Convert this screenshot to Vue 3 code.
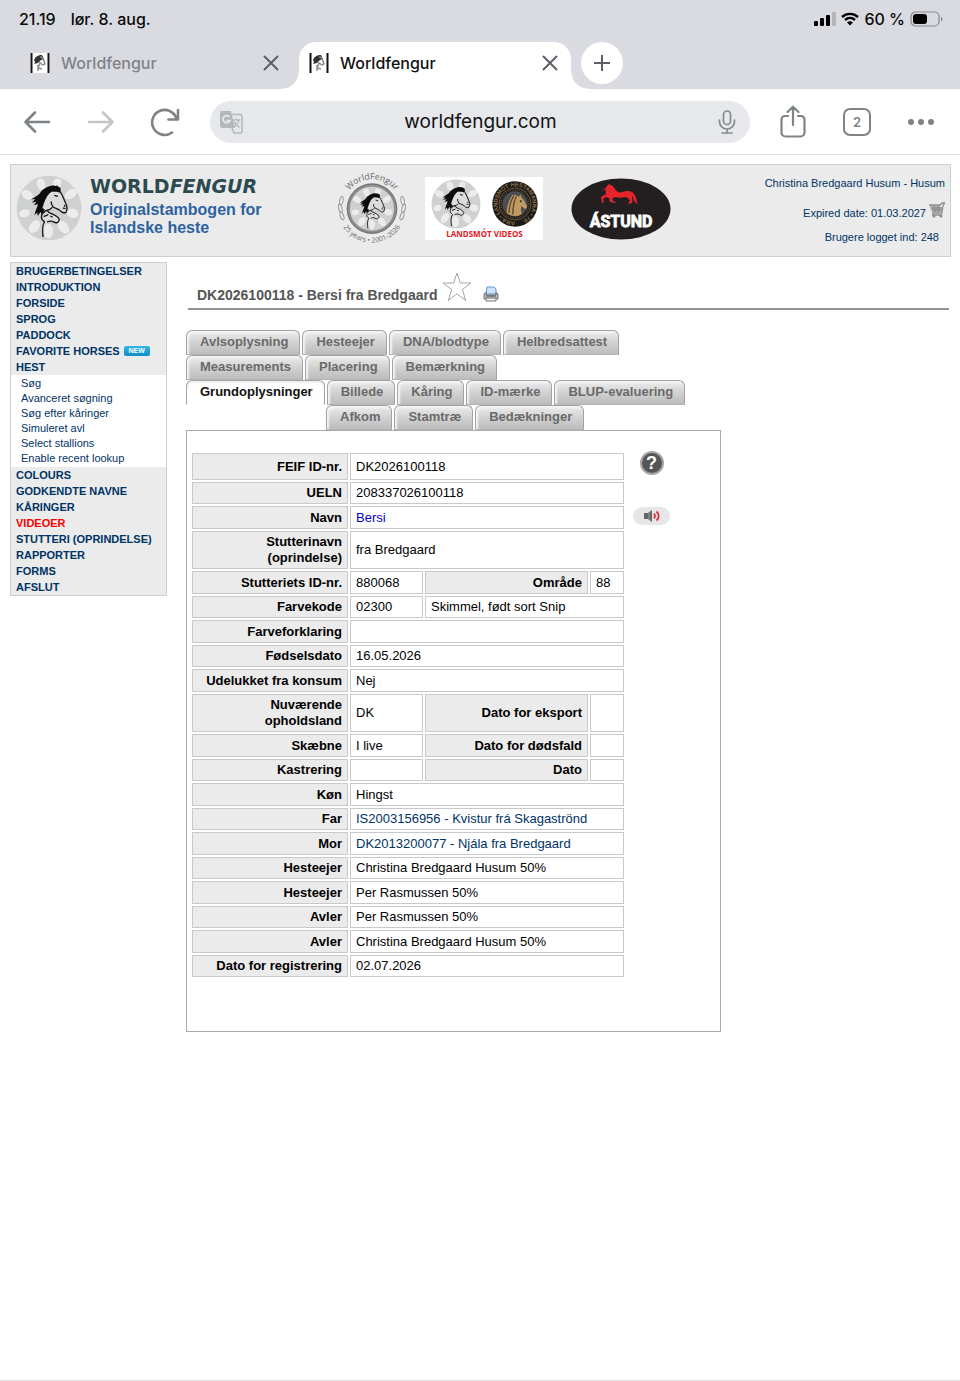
<script setup>
import { ref } from 'vue'

const address = ref('worldfengur.com')

const menuTop = ['BRUGERBETINGELSER', 'INTRODUKTION', 'FORSIDE', 'SPROG', 'PADDOCK', 'FAVORITE HORSES', 'HEST']
const subMenu = ['Søg', 'Avanceret søgning', 'Søg efter kåringer', 'Simuleret avl', 'Select stallions', 'Enable recent lookup']
const menuBottom = ['COLOURS', 'GODKENDTE NAVNE', 'KÅRINGER', 'VIDEOER', 'STUTTERI (OPRINDELSE)', 'RAPPORTER', 'FORMS', 'AFSLUT']

const tabRows = [
  { tabs: ['Avlsoplysning', 'Hesteejer', 'DNA/blodtype', 'Helbredsattest'] },
  { tabs: ['Measurements', 'Placering', 'Bemærkning'] },
  { tabs: ['Grundoplysninger', 'Billede', 'Kåring', 'ID-mærke', 'BLUP-evaluering'] },
  { tabs: ['Afkom', 'Stamtræ', 'Bedækninger'], indent: true }
]

const rows = [
  { label: 'FEIF ID-nr.', value: 'DK2026100118', tall: true },
  { label: 'UELN', value: '208337026100118' },
  { label: 'Navn', value: 'Bersi', kind: 'name' },
  { label: 'Stutterinavn (oprindelse)', value: 'fra Bredgaard' },
  { label: 'Stutteriets ID-nr.', value: '880068', label2: 'Område', value2: '88' },
  { label: 'Farvekode', value: '02300', wide: 'Skimmel, født sort Snip' },
  { label: 'Farveforklaring', value: '' },
  { label: 'Fødselsdato', value: '16.05.2026' },
  { label: 'Udelukket fra konsum', value: 'Nej' },
  { label: 'Nuværende opholdsland', value: 'DK', label2: 'Dato for eksport', value2: '' },
  { label: 'Skæbne', value: 'I live', label2: 'Dato for dødsfald', value2: '' },
  { label: 'Kastrering', value: '', label2: 'Dato', value2: '' },
  { label: 'Køn', value: 'Hingst' },
  { label: 'Far', value: 'IS2003156956 - Kvistur frá Skagaströnd', kind: 'link' },
  { label: 'Mor', value: 'DK2013200077 - Njála fra Bredgaard', kind: 'link' },
  { label: 'Hesteejer', value: 'Christina Bredgaard Husum 50%' },
  { label: 'Hesteejer', value: 'Per Rasmussen 50%' },
  { label: 'Avler', value: 'Per Rasmussen 50%' },
  { label: 'Avler', value: 'Christina Bredgaard Husum 50%' },
  { label: 'Dato for registrering', value: '02.07.2026' }
]

const span = (row) => (row.label2 || row.wide ? 1 : 3)
</script>

<template>
  <div class="screen">
    <svg class="defs" width="0" height="0" aria-hidden="true">
      <symbol id="horses" viewBox="0 0 200 200">
        <path d="M114 32 C96 34 80 42 72 56 C60 66 52 70 45 74 L58 73 L48 84 L62 80 L54 92 L66 88 C66 98 58 108 56 122 L64 114 L66 124 L74 112 L78 118 L98 90 Z" fill="#0c0c0c" />
        <path d="M92 62 C98 48 112 38 126 44 C138 52 142 66 150 84 C156 96 157 102 152 112 C146 117 141 115 134 108 C128 102 120 100 112 96 C108 106 102 108 96 110 L80 100 Z" fill="#dcdcdc" />
        <path d="M126 42 C138 52 142 66 150 84 C156 96 157 102 152 112 C146 118 141 114 134 108 C128 102 120 102 112 96 C108 92 106 86 107 80 M110 98 C104 106 98 106 90 108" fill="none" stroke="#141414" stroke-width="4" />
        <path d="M108 34 C114 28 118 36 122 32 C126 32 128 36 134 38 C136 44 136 50 132 54 C124 48 118 52 110 50 C98 54 92 70 84 84 C76 92 72 84 72 70 C78 52 92 38 108 34Z" fill="#0c0c0c" />
        <path d="M116 62 l11 3 M142 100 l8 2 M146 91 l3 5" stroke="#141414" stroke-width="4" />
        <path d="M96 112 C108 118 122 122 130 134 C130 144 122 147 114 142 C106 138 100 140 94 142 C84 152 80 166 82 186 C78 166 72 142 84 124Z" fill="#dedede" />
        <path d="M94 106 L100 114 C112 118 126 124 131 134 C130 145 122 147 114 142 C106 138 100 140 94 142 M86 112 C76 118 72 132 86 142 C78 154 80 170 82 188 M84 126 L98 120 M76 116 L92 108 M104 125 l7 2" fill="none" stroke="#181818" stroke-width="4" />
      </symbol>
      <symbol id="wheel" viewBox="0 0 200 200">
        <circle cx="100" cy="100" r="98" fill="#cfd1d1" />
        <g fill="#ececec">
          <ellipse cx="76" cy="28" rx="13" ry="18" transform="rotate(-18 76 28)" />
          <ellipse cx="124" cy="28" rx="13" ry="18" transform="rotate(18 124 28)" />
          <ellipse cx="166" cy="58" rx="13" ry="20" transform="rotate(58 166 58)" />
          <ellipse cx="172" cy="116" rx="14" ry="18" transform="rotate(104 172 116)" />
          <ellipse cx="144" cy="158" rx="14" ry="22" transform="rotate(142 144 158)" />
          <ellipse cx="98" cy="170" rx="15" ry="22" />
          <ellipse cx="56" cy="156" rx="14" ry="22" transform="rotate(35 56 156)" />
          <ellipse cx="26" cy="116" rx="12" ry="16" transform="rotate(75 26 116)" />
          <ellipse cx="34" cy="60" rx="13" ry="18" transform="rotate(-58 34 60)" />
        </g>
        <use href="#horses" />
      </symbol>
      <symbol id="favicon" viewBox="0 0 20 20">
        <path d="M0 0h20v20H0z" fill="#fff" />
        <path d="M1.500 0v20M18.500 0v20" stroke="#111" stroke-width="2" />
        <path d="M4 7C5 4 8 2 12 2l2 4-3 1-3 3-4 1 1-2z" fill="#333" />
        <path d="M10 4c4 0 4 5 5 7l-2 1-3-2-2 5 4 1M8 12v6" fill="none" stroke="#8a8a8a" stroke-width="1.500" />
      </symbol>
    </svg>

    <div class="status">
      <span>21.19</span><span class="date">lør. 8. aug.</span>
      <div class="indicators">
        <svg width="22" height="14" viewBox="0 0 22 14"><rect y="9" width="4" height="5" rx="1" /><rect x="6" y="6" width="4" height="8" rx="1" /><rect x="12" y="3" width="4" height="11" rx="1" /><rect x="18" width="4" height="14" rx="1" fill="#b3b5ba" /></svg>
        <svg width="18" height="14" viewBox="0 0 18 14"><path d="M1 5C5.500.8 12.500.8 17 5M4 8c3-2.700 7-2.700 10 0" fill="none" stroke="#000" stroke-width="2.400" /><path d="M6 10.500c2-1.600 4-1.600 6 0L9 13.500z" /></svg>
        <span>60 %</span>
        <svg width="34" height="16" viewBox="0 0 34 16"><rect x="1" y="1" width="28" height="14" rx="4.500" fill="none" stroke="#85878c" stroke-width="1.200" /><rect x="3" y="3" width="14" height="10" rx="3" /><path d="M31 5.500c2 1 2 4 0 5z" fill="#85878c" /></svg>
      </div>
    </div>

    <div class="tabstrip">
      <div class="btab">
        <svg class="fav"><use href="#favicon" /></svg><span>Worldfengur</span>
        <button type="button" aria-label="Luk fane"><svg width="16" height="16" viewBox="0 0 16 16"><path d="M1.500 1.500l13 13M14.500 1.500l-13 13" /></svg></button>
      </div>
      <div class="btab current">
        <svg class="fav"><use href="#favicon" /></svg><span>Worldfengur</span>
        <button type="button" aria-label="Luk fane"><svg width="16" height="16" viewBox="0 0 16 16"><path d="M1.500 1.500l13 13M14.500 1.500l-13 13" /></svg></button>
      </div>
      <button class="plus" type="button" aria-label="Ny fane"><svg width="18" height="18" viewBox="0 0 18 18"><path d="M9 1v16M1 9h16" /></svg></button>
    </div>

    <div class="toolbar">
      <button type="button" aria-label="Tilbage"><svg width="28" height="24" viewBox="0 0 28 24"><path d="M26 12H3M12 2.500L2.500 12 12 21.500" /></svg></button>
      <button type="button" aria-label="Frem" class="dim"><svg width="28" height="24" viewBox="0 0 28 24"><path d="M2 12h23M16 2.500l9.500 9.500-9.500 9.500" /></svg></button>
      <button type="button" aria-label="Genindlæs"><svg width="30" height="30" viewBox="0 0 30 30"><path d="M22 25.500A12.500 12.500 0 1 1 26.500 11.500M28 3v9.500h-9.500" /></svg></button>
      <div class="address">
        <svg width="24" height="24" viewBox="0 0 24 24"><path d="M2 1h10l4 17H3a2 2 0 0 1-2-2V3a2 2 0 0 1 1-2z" fill="#b4b7bb" /><path d="M13 4.500h8a2 2 0 0 1 2 2V21a2 2 0 0 1-2 2h-6l-2-5" fill="none" stroke="#b4b7bb" stroke-width="1.500" /><path d="M10.500 7A3.600 3.600 0 1 0 11 10.500H7.500" fill="none" stroke="#e9ebee" stroke-width="1.600" /><path d="M13.500 10h8M17.500 8.500V10M20 10c-.5 3-2.500 5-5 7M15.500 12c1 2.500 3 4 5 5.500" fill="none" stroke="#b4b7bb" stroke-width="1.400" /></svg>
        <input v-model="address" type="text" aria-label="Adresse" />
        <svg width="18" height="24" viewBox="0 0 18 24"><g fill="none" stroke="#85898e" stroke-width="1.700" stroke-linecap="round"><rect x="5.500" y="1" width="7" height="13.500" rx="3.500" /><path d="M1.500 10v1.500a7.500 7.500 0 0 0 15 0V10M9 19v3.500M4 23h10" /></g></svg>
      </div>
      <button type="button" aria-label="Del"><svg width="28" height="34" viewBox="0 0 28 34"><path d="M9 11H6a3.500 3.500 0 0 0-3.500 3.500v13A4 4 0 0 0 6.500 31.500h15a4 4 0 0 0 4-4v-13A3.500 3.500 0 0 0 22 11h-3M14 20V2M8.500 7L14 1.700 19.500 7" stroke-width="2.200" /></svg></button>
      <button type="button" aria-label="Faner"><span class="count">2</span></button>
      <button type="button" aria-label="Menu"><svg width="28" height="8" viewBox="0 0 28 8"><g fill="#7d8387" stroke="none"><circle cx="4" cy="4" r="3" /><circle cx="14" cy="4" r="3" /><circle cx="24" cy="4" r="3" /></g></svg></button>
    </div>

    <div class="page">
      <header class="banner">
        <svg class="logo"><use href="#wheel" /></svg>
        <div class="brand">
          <h1>WORLD<em>FENGUR</em></h1>
          <p>Originalstambogen for<br />Islandske heste</p>
        </div>
        <svg class="badge" width="68" height="72" viewBox="0 0 204 216">
          <defs>
            <path id="arcTop" d="M14 104A88 88 0 0 1 190 104" />
            <path id="arcBottom" d="M0 104A102 102 0 0 0 204 104" />
          </defs>
          <circle cx="102" cy="104" r="76" fill="#777" /><circle cx="102" cy="104" r="71" fill="#bbb" />
          <svg x="34" y="36" width="136" height="136"><use href="#wheel" /></svg>
          <circle cx="102" cy="104" r="69" fill="none" stroke="#8c8c8c" stroke-width="5" />
          <g font-family="Open Sans, sans-serif" fill="#666" text-anchor="middle">
            <text font-size="26"><textPath href="#arcTop" startOffset="50%">WorldFengur</textPath></text>
            <text font-size="21"><textPath href="#arcBottom" startOffset="50%">25 years • 2001-2026</textPath></text>
          </g>
          <g fill="none" stroke="#999" stroke-width="3">
            <ellipse cx="10" cy="80" rx="5" ry="13" transform="rotate(12 10 80)" /><ellipse cx="7" cy="103" rx="5" ry="13" transform="rotate(-12 7 103)" /><ellipse cx="12" cy="126" rx="5" ry="12" transform="rotate(-18 12 126)" />
            <ellipse cx="194" cy="80" rx="5" ry="13" transform="rotate(-12 194 80)" /><ellipse cx="197" cy="103" rx="5" ry="13" transform="rotate(12 197 103)" /><ellipse cx="192" cy="126" rx="5" ry="12" transform="rotate(18 192 126)" />
          </g>
        </svg>
        <a class="landsmot" href="#">
          <span class="pics">
            <svg width="50" height="50"><use href="#wheel" /></svg>
            <svg width="46" height="46" viewBox="0 0 138 138">
              <defs><path id="ring" d="M69 122A53 53 0 1 1 69.500 122" /></defs>
              <circle cx="69" cy="69" r="68" fill="#1c1a18" />
              <circle cx="69" cy="69" r="48" fill="none" stroke="#94764a" stroke-width="2" />
              <circle cx="69" cy="69" r="38" fill="#4b4f53" />
              <circle cx="69" cy="69" r="42" fill="none" stroke="#94764a" stroke-width="3" stroke-dasharray="3 4" />
              <text font-family="Liberation Sans, sans-serif" font-weight="bold" font-size="17" fill="#8d7145"><textPath href="#ring">ÁRA • LANDSMÓT HESTAMANNA • 70</textPath></text>
              <path d="M62 42C52 54 44 78 44 96c12 12 34 12 46 2-4-8-4-16-2-22 6 4 10 8 14 7 4-2 4-8 1-12-4-8-8-16-14-20l-3-10-5 6c-6-4-13-6-19-5z" fill="#c09a62" />
              <path d="M66 44c-8 12-14 26-15 52M74 46c-10 12-10 28-12 54" fill="none" stroke="#5b4426" stroke-width="4" />
              <circle cx="86" cy="61" r="3" fill="#2b2018" />
            </svg>
          </span>
          <span class="caption">LANDSMÓT VIDEOS</span>
        </a>
        <svg class="astund" width="100" height="62" viewBox="0 0 100 62">
          <ellipse cx="50" cy="31" rx="49.500" ry="30.500" fill="#231f20" />
          <path d="M33 12L36 8l2-2 2 1c3 1 4 5 7 7 3 1 5 0 8-1 3 0 6 0 8 3 3 3 2 7 4 10-3-1-5-4-5-7l-1-1c0 3 1 4 0 7l-4 1 1-2 1-1-2-3-3-1c-4 1-7 1-10 0l-3 2 1 2 3 1-1 1-5-1-1-4-3-1-3 2 1 3-2 1-1-6 5-3c-1-2 0-4-1-6l-3 3z" fill="#e5242b" />
          <text x="50" y="49" text-anchor="middle" font-family="Liberation Sans Narrow, Roboto, sans-serif" font-weight="bold" font-size="16" fill="#fff" stroke="#fff" stroke-width="0.800">ÁSTUND</text>
        </svg>
        <div class="account">
          <a href="#">Christina Bredgaard Husum - Husum</a>
          <span class="expiry">Expired date: 01.03.2027
            <svg width="16" height="16" viewBox="0 0 16 16"><path d="M0 3h11l2 7H3z" fill="#b5b5b5" /><path d="M0 3h11l2-2h3l-2 2-1 8H3M2 6h11M3 8h10M5 3l1 7M9 3v8M3 13h10" fill="none" stroke="#909090" stroke-width="1.300" /><circle cx="5" cy="14" r="1.500" fill="#888" /><circle cx="12" cy="14" r="1.500" fill="#888" /></svg>
          </span>
          <span class="online">Brugere logget ind: 248</span>
        </div>
      </header>

      <div class="columns">
        <nav class="menu">
          <ul>
            <li v-for="item in menuTop" :key="item"><a href="#">{{ item }}</a><span v-if="item === 'FAVORITE HORSES'" class="new">NEW</span></li>
          </ul>
          <ul class="sub">
            <li v-for="item in subMenu" :key="item"><a href="#">{{ item }}</a></li>
          </ul>
          <ul>
            <li v-for="item in menuBottom" :key="item"><a href="#" :class="{ red: item === 'VIDEOER' }">{{ item }}</a></li>
          </ul>
        </nav>

        <main>
          <div class="title">
            <h2>DK2026100118 - Bersi fra Bredgaard</h2>
            <button type="button" aria-label="Favorit"><svg width="30" height="30" viewBox="0 0 30 30"><path d="M15 1l3.300 10H29l-8.600 6.400L23.700 28.500 15 21.800 6.300 28.500 9.600 17.400 1 11h10.700z" fill="#fff" stroke="#a5a5a5" /></svg></button>
            <button type="button" aria-label="Udskriv"><svg width="16" height="16" viewBox="0 0 16 16"><path d="M4 1h7l2 2v5H3z" fill="#cfe4fb" stroke="#5b95d6" /><path d="M1 8l2-2v3h10V6l2 2v5H1z" fill="#b9b9bd" stroke="#77777c" /><path d="M3 10h10" stroke="#555" /><path d="M3 12h10v3H3z" fill="#eee" stroke="#77777c" /></svg></button>
          </div>

          <div class="tabs">
            <div v-for="(row, i) in tabRows" :key="i" class="tabrow" :class="{ indent: row.indent }">
              <button v-for="tab in row.tabs" :key="tab" type="button" :class="{ active: tab === 'Grundoplysninger' }">{{ tab }}</button>
            </div>
          </div>

          <section class="panel">
            <table>
              <colgroup><col class="c1" /><col class="c2" /><col class="c3" /><col class="c4" /></colgroup>
              <tbody>
                <tr v-for="(row, i) in rows" :key="i" :class="{ tall: row.tall }">
                  <th scope="row">{{ row.label }}</th>
                  <td :colspan="span(row)">
                    <a v-if="row.kind" href="#" :class="row.kind">{{ row.value }}</a>
                    <template v-else>{{ row.value }}</template>
                  </td>
                  <template v-if="row.label2">
                    <th scope="row">{{ row.label2 }}</th>
                    <td>{{ row.value2 }}</td>
                  </template>
                  <td v-if="row.wide" colspan="2">{{ row.wide }}</td>
                </tr>
              </tbody>
            </table>
            <div class="tools">
              <button type="button" class="help" aria-label="Hjælp">?</button>
              <button type="button" class="sound" aria-label="Afspil navn"><svg width="18" height="12" viewBox="0 0 18 12"><path d="M1 3h4l4-3v12L5 9H1z" fill="#666" /><path d="M6 2v8" stroke="#999" /><path d="M11 3.500q2 2.500 0 5M13.500 1.500q4.500 4.500 0 9" fill="none" stroke="#d9333f" stroke-width="1.800" /></svg></button>
            </div>
          </section>
        </main>
      </div>
    </div>
  </div>
</template>

<style>
body { margin: 0; background: #fff; }
</style>

<style scoped>
* { box-sizing: border-box; }
button { border: 0; padding: 0; background: none; font: inherit; color: inherit; }
a { color: #003366; text-decoration: none; }
h1, h2, p, ul { margin: 0; padding: 0; list-style: none; }
svg { display: block; flex: none; }
.defs { position: absolute; }
.screen { min-height: 100vh; border-bottom: 1px solid #ddd; font-family: "Liberation Sans", Arial, sans-serif; }

.status { display: flex; align-items: center; height: 42px; padding: 0 16px 4px 19px; background: #d9dbe1; font: 500 16px Inter, sans-serif; color: #0b0b0c; }
.date { margin-left: 15px; }
.indicators { display: flex; align-items: center; gap: 5px; margin-left: auto; }

.tabstrip { display: flex; height: 47px; padding-left: 20px; background: #d9dbe1; font: 500 16px Inter, sans-serif; }
.btab { position: relative; display: flex; align-items: center; width: 272px; height: 47px; padding: 0 13px 5px 10px; color: #808287; }
.btab + .btab { margin-left: 7px; }
.btab .fav { width: 20px; height: 20px; margin-right: 11px; }
.btab button { margin-left: auto; }
.btab button path { fill: none; stroke: #5c6065; stroke-width: 2; stroke-linecap: round; }
.btab.current { background: #fff; border-radius: 17px 17px 0 0; color: #111; }
.btab.current::before, .btab.current::after { content: ""; position: absolute; bottom: 0; width: 17px; height: 17px; }
.btab.current::before { left: -17px; background: radial-gradient(circle at 0 0, transparent 16px, #fff 17px); }
.btab.current::after { right: -17px; background: radial-gradient(circle at 100% 0, transparent 16px, #fff 17px); }
.plus { position: relative; display: grid; place-items: center; width: 42px; height: 42px; margin-left: 10px; border-radius: 50%; background: #fff; }
.plus path { fill: none; stroke: #5c6065; stroke-width: 2; }

.toolbar { display: flex; align-items: center; height: 66px; padding: 0 7px 0 5px; border-bottom: 1px solid #dcdddf; }
.toolbar button { display: grid; place-items: center; width: 64px; height: 48px; }
.toolbar button svg { fill: none; stroke: #7d8387; stroke-width: 2.6px; stroke-linecap: round; stroke-linejoin: round; }
.toolbar .dim svg { stroke: #c3c5c8; }
.address { display: flex; flex: 1; align-items: center; min-width: 0; height: 42px; margin: 0 11px 0 13px; padding: 0 14px 0 9px; border-radius: 21px; background: #e6e8ec; }
.address input { flex: 1; min-width: 0; border: 0; padding: 0; background: none; text-align: center; font: 400 19px Inter, sans-serif; color: #111; }
.count { display: grid; place-items: center; width: 28px; height: 28px; border: 2px solid #7d8387; border-radius: 7px; font: 600 13px Inter, sans-serif; color: #7d8387; }

.page { padding: 9px 9px 0 10px; }
.banner { display: flex; height: 93px; border: 1px solid #cecece; background: #ebebeb; }
.logo { width: 66px; height: 66px; margin: 10px 8px 0 5px; }
.brand { width: 248px; padding-top: 9px; }
h1 { font: bold 19px/24px "DejaVu Sans", Verdana, sans-serif; color: #2d4a50; }
.brand p { font-size: 16px; line-height: 18px; font-weight: bold; color: #2d62a0; padding-top: 3px; }
.badge { margin-top: 9px; overflow: visible; }
.landsmot { display: flex; flex-direction: column; width: 118px; height: 63px; margin: 12px 0 0 19px; padding: 2px 5px 0 6px; background: #fff; text-align: center; }
.pics { display: flex; align-items: center; justify-content: space-between; }
.caption { font: bold 8px/10px "Open Sans", sans-serif; color: #e8151c; }
.astund { margin: 13px 0 0 28px; }
.account { display: flex; flex-direction: column; align-items: flex-end; margin-left: auto; padding: 10px 5px 0 0; font-size: 11px; line-height: 16px; color: #003366; }
.expiry { display: flex; gap: 3px; line-height: 24px; padding-top: 10px; }
.expiry svg { margin-top: 1px; }
.online { padding: 4px 6px 0 0; }

.columns { display: flex; align-items: flex-start; padding-top: 5px; }
.menu { flex: none; width: 157px; border: 1px solid #cecece; background: #ebebeb; font-size: 11px; line-height: 16px; font-weight: bold; }
.menu li { display: flex; align-items: center; padding-left: 5px; white-space: nowrap; }
.menu .sub { padding: 1px 0; background: #fff; font-weight: normal; line-height: 15px; }
.menu .sub li { padding-left: 10px; }
.menu .red { color: #f00; }
.new { width: 26px; height: 10px; margin-left: 4px; border-radius: 2px; background: linear-gradient(#35b5e5, #0a8fc8); color: #fff; font-size: 7px; line-height: 10px; text-align: center; }

main { flex: 1; min-width: 0; padding-left: 19px; }
.title { display: flex; align-items: flex-end; height: 48px; margin: 0 2px 20px; padding: 0 0 6px 9px; border-bottom: 2px solid #929292; }
h2 { margin-right: 5px; font-size: 14px; line-height: 14px; color: #555; }
.title button + button { margin-left: 11px; }
.tabrow { display: flex; gap: 2px; height: 25px; }
.indent { padding-left: 140px; }
.tabrow button { padding: 0 11px 3px 13px; border: 1px solid #a3a3a3; border-bottom-color: #b5b5b5; border-radius: 6px 6px 0 0; background: linear-gradient(#ededed, #d2d2d2 50%, #bcbcbc); box-shadow: inset 2px 2px 2px #f4f4f4; font-size: 13px; font-weight: bold; color: #6a6a6a; white-space: nowrap; }
.tabrow .active { border-bottom-color: #fff; background: #fff; color: #111; box-shadow: inset 0 2px 2px #eee; }

.panel { display: flex; align-items: flex-start; max-width: 535px; padding: 20px 0 52px 3px; border: 1px solid #a9a9a9; }
table { flex: none; width: 435px; table-layout: fixed; border-collapse: separate; border-spacing: 2px; font-size: 13px; line-height: 16px; color: #000; }
.c1 { width: 156px; }
.c2 { width: 73px; }
.c3 { width: 163px; }
.c4 { width: 34px; }
th, td { height: 23px; padding: 2px 5px; border: 1px solid #c9c9c9; text-align: left; }
tr:nth-child(even) th, tr:nth-child(even) td { height: 22px; }
.tall th, .tall td { height: 27px; }
th { background: #ebebeb; text-align: right; }
.name { color: #0000cc; }
.tools { display: flex; flex-direction: column; align-items: center; gap: 32px; padding-left: 7px; }
.help { width: 24px; height: 24px; border: 2px solid #a5a5a5; border-radius: 50%; background: #555; color: #fff; font-size: 18px; line-height: 20px; font-weight: bold; }
.sound { display: grid; place-items: center; width: 37px; height: 18px; border-radius: 9px; background: #e6e6e6; }
</style>
